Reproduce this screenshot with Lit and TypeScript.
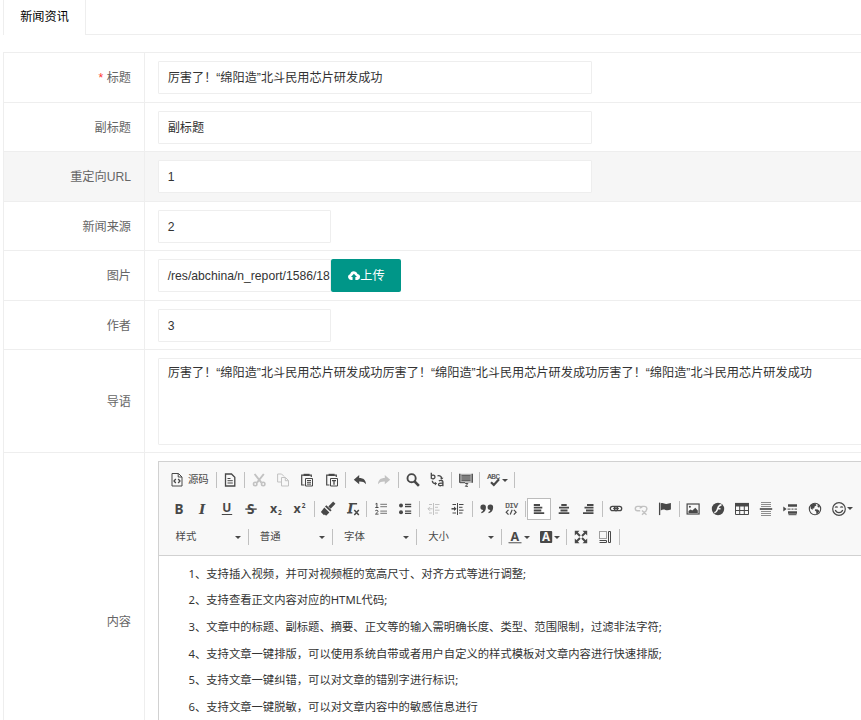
import { LitElement, html, svg, css, nothing } from "lit";
import { customElement, property } from "lit/decorators.js";
import { classMap } from "lit/directives/class-map.js";

const letter = (t: string, x: number, y: number, size: number, extra = "") =>
  svg`<text class="ch ${extra}" x=${x} y=${y} font-size=${size}>${t}</text>`;

/* Glyphs are drawn on a 16 x 16 grid. */
const icons: Record<string, unknown> = {
  source: svg`<path class="s" d="M3 1.5h6.5L13 5v9H3zM9.2 1.700V5H13"/><path class="s" stroke-width="1.300" d="M6.800 7L5 9l1.800 2M9.200 7L11 9l-1.800 2"/>`,
  newpage: svg`<path class="s" stroke-width="1.300" d="M3.500 2h6L12.800 5.300V14H3.500z"/><path class="s" d="M5.500 6.500h3M5.500 8.700h5.300M5.500 11h5.300"/>`,
  cut: svg`<path class="s" stroke-width="1.900" d="M3.600 2l6.800 8.600M12.800 2L6 10.600"/><circle class="s" cx="4.200" cy="12" r="1.700" stroke-width="1.600"/><circle class="s" cx="12.200" cy="12" r="1.700" stroke-width="1.600"/>`,
  copy: svg`<path class="s" d="M6.300 10H2.600V2h4l2.600 2.600M6.500 5.500h4L13.500 8.500V14h-7zM10.300 5.700v3h3"/>`,
  paste: svg`<path class="s" stroke-width="1.200" d="M5.500 13H2.700V3.200h9.600V5"/><path class="f" d="M4.600 1.800h6v2.200h-6z"/><path class="s" d="M6.500 6.500h7v7.500h-7zM8 8.500h4M8 10.300h4M8 12.100h4"/>`,
  pastetext: svg`<path class="s" stroke-width="1.200" d="M5.500 13H2.700V3.200h9.600V5"/><path class="f" d="M4.600 1.800h6v2.200h-6z"/><path class="s" d="M6.500 6.500h7v7.500h-7z"/><path class="s" stroke-width="1.300" d="M8 8.600h4M10 8.500v4.200"/>`,
  undo: svg`<path class="f" d="M1.800 7.700L7.200 3v2.900c4.300 0 6.600 2 6.800 6.300-1.700-2.300-3.600-2.900-6.800-2.800v2.900z"/>`,
  redo: svg`<path class="f" d="M14.200 7.700L8.800 3v2.900C4.500 5.900 2.200 7.900 2 12.200c1.700-2.300 3.600-2.900 6.800-2.800v2.900z"/>`,
  find: svg`<circle class="s" cx="6.600" cy="6.200" r="4.100" stroke-width="1.900"/><path class="s" stroke-width="2.600" d="M9.300 9.200l4.600 4.700"/>`,
  replace: svg`<path class="s" stroke-width="1.300" d="M2.300 .800v6M2.300 3.700c1-1 3.700-.8 3.700 1.300S3.300 7.200 2.300 6M9.900 9c1-.8 4-.8 4 .8v4.500M13.900 11.300c-2.800-.4-4.600.2-4.400 1.500s3.400 1.300 4.400-.3M8.500 3.800c2.700-.4 4 .5 4.200 2.700M3.300 8.800c.1 2.100 1 2.800 3.200 2.800"/><path class="f" d="M10.900 5.700h3.600l-1.800 2zM5.900 9.700l2.200 1.900-2.200 1.800z"/>`,
  selectall: svg`<path class="f" opacity=".4" d="M1.500 1.800h13v9h-13z"/><path class="s" stroke-width="1.200" d="M3.500 3.800h9M3.500 6h9M3.500 8.200h9M1.700 1.800v9M14.300 1.800v9"/><path class="s" d="M2 10.700h5M7.200 11.500h2.700l-2.500 2.800H10"/>`,
  spell: svg`${letter("ABC", 1.300, 7, 7.600, "narrow")}<path class="s" stroke-width="2.200" d="M5 10.300l2.800 2.600L13 7.200"/>`,
  bold: letter("B", 3.400, 12.600, 13.500),
  italic: letter("I", 4.100, 12.500, 13.500, "serif it"),
  underline: svg`${letter("U", 3.200, 11.300, 12)}<path class="s" d="M2.800 13.500h10.400"/>`,
  strike: svg`${letter("S", 4, 12.700, 13.500)}<path class="s" stroke-width="1.400" d="M2.300 8.100h11.400"/>`,
  sub: svg`${letter("x", 2, 11.800, 12.500)}${letter("2", 10, 13.700, 6.500)}`,
  sup: svg`${letter("x", 1.600, 12, 12.500)}${letter("2", 9.700, 6.800, 6.500)}`,
  brush: svg`<path class="s" stroke-width="3.200" d="M14.300 1.700L9.500 6.700"/><path class="f" d="M6.400 4.300l5.200 5-1.300 1.300L5 5.600zM4.300 6.500l5.100 5-3.300 3.200-1.300-1.300-.8.800L.900 11z"/>`,
  clear: svg`${letter("I", 2.300, 12, 13.500, "serif it")}<path class="s" stroke-width="1.500" d="M4.600 2.800h7.500M9.300 9l4.500 4.900M13.800 9L9.300 13.900"/><path class="s" d="M2 12h5.300"/>`,
  ol: svg`<path class="s" d="M2.500 3l1.400-.8v4.300M2.300 6.500h3.200M2.300 9.800c.6-.8 2.700-.8 2.700.4 0 1-1.200 1.500-2.500 2.900h3"/><path class="s soft" stroke-width="1.300" d="M7.300 3.400h6.700M7.300 5.600h6.700M7.300 10.200h6.700M7.300 12.400h6.700"/>`,
  ul: svg`<circle class="f" cx="4" cy="4.500" r="2"/><circle class="f" cx="4" cy="11.200" r="2"/><path class="s" stroke-width="1.300" d="M8 3.500h6.200M8 5.700h6.200M8 10.200h6.200M8 12.400h6.200"/>`,
  outdent: svg`<path class="s" d="M7.500 2v12M9 3.500h4.500M9 6.300h3M9 9.200h4.500M9 12h3M3 3.500h3M3 12h3M2 7.800h4.500M4 5.800l-2 2 2 2"/>`,
  indent: svg`<path class="s" d="M7.500 2v12M9 3.500h4.500M9 6.300h3.500M9 9.200h4.500M9 12h3.500M2.500 3.500h3.500M2.500 12h3.500"/><path class="s" stroke-width="1.500" d="M1.500 7.800h4"/><path class="f" d="M4 5.600l2.600 2.200L4 10z"/>`,
  quote: svg`<path class="f" d="M4.100 3.500a2.700 2.700 0 0 1 2.800 2.900c0 3-1.700 5.300-4.300 5.900l-.5-1.300c1.200-.5 1.800-1.200 2-2.100a2.700 2.700 0 0 1 0-5.400zM11.300 3.500a2.700 2.700 0 0 1 2.800 2.900c0 3-1.700 5.300-4.300 5.900l-.5-1.300c1.200-.5 1.800-1.200 2-2.100a2.700 2.700 0 0 1 0-5.400z"/>`,
  div: svg`${letter("DIV", 2.300, 6.800, 7.600, "narrow")}<path class="s" stroke-width="1.200" d="M5.500 8.800L3.200 11.200l2.300 2.400M10.800 8.800l2.300 2.400-2.300 2.400M9.200 8.800l-2 4.800"/>`,
  left: svg`<path class="s" stroke-width="1.800" d="M2.800 4h6.200M2.800 6.700h8.500M2.800 9.500h7.500M2.800 12.200h10.400"/>`,
  center: svg`<path class="s" stroke-width="1.800" d="M5.300 4h5.400M3 6.700h10M4.500 9.500h7M2.700 12.200h10.600"/>`,
  right: svg`<path class="s" stroke-width="1.800" d="M7 4h6.500M4.500 6.700h9M6 9.500h7.500M3 12.200h10.500"/>`,
  link: svg`<rect class="s" x="2.300" y="5.300" width="7.300" height="4.400" rx="2.200" stroke-width="1.300"/><rect class="s" x="6.400" y="5.300" width="7.300" height="4.400" rx="2.200" stroke-width="1.300"/><path class="s" stroke-width="1.200" d="M5.200 7.500h5.600"/>`,
  unlink: svg`<path class="s" stroke-width="1.400" d="M7.200 9.800H4.500a2.200 2.200 0 0 1 0-4.400H7a2.200 2.200 0 0 1 2 1.600M7.200 7.600a2.200 2.200 0 0 1 2-2.200h2.300c2.500 0 3 3 1.500 3.900M9 9.500l4.500 4.300M13.500 9.500L9 13.800"/>`,
  flag: svg`<path class="s" stroke-width="1.300" d="M2.600 1.600v12.500"/><path class="f" d="M3.700 2.500c2.300-1.300 3.800.8 5.700.5 1.600 0 2.900-.6 4.500-.9v6.400c-2 .7-3.800 1-5.500.4-1.800-.7-3.200-.3-4.700.6z"/>`,
  image: svg`<rect class="s" x="2.100" y="3" width="12" height="10" stroke-width="1.200"/><circle class="f" cx="4.900" cy="5.700" r="1"/><path class="f" d="M3.500 12v-2l2-1.500 1.800 1L10.300 6.800l2.500 2.600V12z"/>`,
  flash: svg`<circle class="f" cx="8" cy="8" r="6.200"/><path fill="none" stroke="#f8f8f8" stroke-width="1.600" d="M11.500 3.900C8.300 4 8.100 6.500 7.300 8.800c-.5 1.500-1.200 2.700-3 2.900M7.500 7.800h3"/>`,
  table: svg`<path class="f" d="M1 1.900h14v3.600H1z"/><path class="s" d="M1.500 5v8.500h13V5M1.500 9.500h13M5.700 5v8.500M10.300 5v8.500"/>`,
  hr: svg`<path class="s soft" d="M3 1.500h10M3 3.500h10M3 5.500h10M3 10.500h10M3 12.500h10M3 14.500h10"/><path class="s" stroke-width="1.600" d="M1.800 8h12.400"/>`,
  pagebreak: svg`<path class="f" d="M1.300 5.500L4.600 8l-3.300 2.500zM6 3.300h9v2.400H6zM6 10.300h9v2.400H6z"/><path class="s" d="M5.500 8.100h3m1 0h2m1 0h2.500M6.500 13.700h8"/>`,
  globe: svg`<circle class="s" cx="8" cy="8" r="5.700" stroke-width="1.100"/><path class="f" d="M3.500 4.500l2.800-2 2.400.4.700 1.700-1.800 1-.4 1.700-1.800.5L6 9 3.800 7.700zM8.200 8.200l2.600.2 1.700 1.500-1.800 2.800-1.300.4-.2-2.500-1.400-1zM10.800 3.300l2 2.200-.8 1.300-1.500-1z"/>`,
  smile: svg`<circle class="s" cx="8" cy="8" r="6.300" stroke-width="1.200"/><path class="s" stroke-width="1.300" d="M4.300 9c1.300 3.500 6.100 3.500 7.400 0M4.200 6.600c.4-1 2-1 2.400 0M9.400 6.600c.4-1 2-1 2.400 0"/>`,
  color: svg`${letter("A", 3.400, 11.500, 12.500)}<path class="s" stroke-width="1.300" opacity=".75" d="M1.500 13.700h13"/>`,
  bgcolor: svg`<rect class="f" x="2" y="1.900" width="12.200" height="12.200" rx="1"/><text class="ch inv" x="4" y="12" font-size="11.500">A</text>`,
  maximize: svg`<path class="f" d="M1.800 1.800h4.700L1.800 6.500zM14.200 1.800H9.500l4.700 4.700zM1.800 14.200h4.700L1.800 9.500zM14.200 14.200H9.500l4.700-4.700z"/><path class="s" stroke-width="2" d="M3 3l4 4M13 3L9 7M3 13l4-4M13 13L9 9"/>`,
  blocks: svg`<path class="s" stroke-dasharray="1 1" d="M2.500 2.500h7v7h-7z"/><path class="s" d="M11.500 2.500h2v11h-2M2.500 11.500h7v2h-7M11.500 2.500v11"/>`,
  upload: svg`<path class="f" d="M5 13.100A3.600 3.600 0 0 1 3.700 6.100a4.600 4.600 0 0 1 8.800-.3 3.700 3.700 0 0 1-.2 7.300H9.900V9.500h1.900L8.200 5.500 4.700 9.500h1.900v3.600z"/>`,
};

@customElement("ui-icon")
class UiIcon extends LitElement {
  @property() name = "";
  static styles = css`
    :host { display: block; width: 16px; height: 16px; flex: none; }
    svg { display: block; width: 100%; height: 100%; overflow: visible; }
    .s { fill: none; stroke: currentColor; }
    .f { fill: currentColor; }
    .soft { opacity: 0.6; }
    .ch { fill: currentColor; font-family: "Noto Sans", sans-serif; font-weight: 700; }
    .narrow { font-family: "Liberation Mono", monospace; font-weight: 400; stroke: currentColor; stroke-width: 0.2; letter-spacing: -0.5px; }
    .serif { font-family: "DejaVu Serif", serif; }
    .it { font-style: italic; }
    .inv { fill: #f8f8f8; }
  `;
  render() {
    return html`<svg viewBox="0 0 16 16">${icons[this.name]}</svg>`;
  }
}

type Tool = string;
const rows: Tool[][] = [
  ["source", "|", "newpage", "|", "cut-", "copy-", "paste", "pastetext", "|", "undo", "redo-", "|", "find", "replace", "|", "selectall", "|", "spell+", "|"],
  ["bold", "italic", "underline", "strike", "sub", "sup", "|", "brush", "clear", "|", "ol", "ul", "|", "outdent-", "indent", "|", "quote", "div", "|", "left*", "center", "right", "|", "link", "unlink-", "flag", "|", "image", "flash", "table", "hr", "pagebreak", "globe", "smile+"],
  ["样式", "|", "普通", "|", "字体", "|", "大小", "|", "color+", "bgcolor+", "|", "maximize", "blocks", "|"],
];

@customElement("rich-editor")
class RichEditor extends LitElement {
  static styles = css`
    :host { display: block; height: 300px; border: 1px solid #d1d1d1; box-sizing: border-box; background: #fff; color: #484848; }
    .bar { height: 94px; box-sizing: border-box; background: #f8f8f8; border-bottom: 1px solid #d1d1d1; padding: 4px 0 0 7.4px; }
    .line { display: flex; align-items: center; height: 28.5px; }
    .tool { width: 24.28px; height: 22px; box-sizing: border-box; flex: none; display: flex; align-items: center; justify-content: center; }
    .off { opacity: 0.3; }
    .on { background: #fff; border: 1px solid #bcbcbc; }
    .drop { width: 30.6px; justify-content: flex-start; padding-left: 4px; gap: 0.5px; }
    .source { width: 47.5px; justify-content: flex-start; padding-left: 3px; gap: 2.5px; }
    .combo { width: 80px; justify-content: space-between; padding: 0 5.5px 0 9.2px; }
    .label { font: 10.4px/16px "Liberation Sans", "Noto Sans CJK SC", sans-serif; white-space: nowrap; }
    .caret { width: 0; height: 0; flex: none; border: 3px solid transparent; border-top: 3px solid #484848; border-bottom: 0; }
    .sep { width: 1px; height: 16px; margin: 0 1.62px; background: #c0c0c0; flex: none; }
    .doc { padding: 4.500px 0 0 29.500px; font: 11.32px/26.7px "Noto Sans", "Noto Sans CJK SC", sans-serif; color: #333; }
    p { margin: 0; white-space: nowrap; }
  `;
  tool(t: Tool) {
    if (t === "|") return html`<span class="sep"></span>`;
    if (t === "source") return html`<span class="tool source"><ui-icon name="source"></ui-icon><span class="label">源码</span></span>`;
    if (t > "~") return html`<span class="tool combo"><span class="label">${t}</span><span class="caret"></span></span>`;
    const flags = { tool: true, off: t.endsWith("-"), on: t.endsWith("*"), drop: t.endsWith("+") };
    return html`<span class=${classMap(flags)}><ui-icon name=${t.replace(/[-*+]$/, "")}></ui-icon>${flags.drop ? html`<span class="caret"></span>` : nothing}</span>`;
  }
  render() {
    return html`
      <div class="bar">${rows.map((r) => html`<div class="line">${r.map((t) => this.tool(t))}</div>`)}</div>
      <div class="doc">
        <p>1、支持插入视频，并可对视频框的宽高尺寸、对齐方式等进行调整;</p>
        <p>2、支持查看正文内容对应的HTML代码;</p>
        <p>3、文章中的标题、副标题、摘要、正文等的输入需明确长度、类型、范围限制，过滤非法字符;</p>
        <p>4、支持文章一键排版，可以使用系统自带或者用户自定义的样式模板对文章内容进行快速排版;</p>
        <p>5、支持文章一键纠错，可以对文章的错别字进行标识;</p>
        <p>6、支持文章一键脱敏，可以对文章内容中的敏感信息进行</p>
      </div>`;
  }
}

const title = "厉害了！“绵阳造”北斗民用芯片研发成功";

@customElement("app-root")
class AppRoot extends LitElement {
  static styles = css`
    :host { display: block; height: 720px; overflow: hidden; background: #fff; color: #333; font: 12.16px/18px "Liberation Sans", "Noto Sans CJK SC", sans-serif; }
    .tabs { display: flex; height: 35px; padding-left: 3px; margin-bottom: 17px; }
    .tab { width: 83px; box-sizing: border-box; border: solid #eee; border-width: 0 1px; text-align: center; line-height: 34.500px; color: #000; }
    .fill { flex: 1; border-bottom: 1px solid #eee; }
    .form { margin-left: 3px; border: solid #eee; border-width: 1px 0 0 1px; }
    .row { display: flex; height: 49.5px; box-sizing: border-box; border-bottom: 1px solid #eee; }
    .hover { background: #f6f6f6; }
    .name { width: 141px; box-sizing: border-box; flex: none; border-right: 1px solid #eee; padding: 2px 13px 0 0; display: flex; align-items: center; justify-content: flex-end; color: #666; }
    .req { color: #f33; margin-right: 3.500px; }
    .cell { flex: 1; min-width: 0; display: flex; padding: 8px 0 0 13px; }
    .field { width: 434px; height: 33px; box-sizing: border-box; border: 1px solid #eee; border-radius: 1px; background: #fff; padding-left: 8.700px; line-height: 33px; white-space: nowrap; overflow: hidden; }
    .short { width: 173px; }
    .tall { height: 103px; }
    .area { flex: 1; height: 87px; line-height: 17px; padding-top: 5.500px; margin-right: -2px; }
    .upload { width: 70px; height: 33px; box-sizing: border-box; padding-top: 1px; background: #009688; color: #fff; border-radius: 2px; display: flex; align-items: center; justify-content: center; }
    .upload ui-icon { width: 13.500px; height: 13.500px; margin-right: -0.500px; }
    .body { height: 400px; }
    .body .name { height: 337px; padding-top: 0; }
    .body rich-editor { flex: 1; margin-right: -2px; }
  `;
  row(name: string, content: unknown, kind = "", required = false) {
    return html`<div class="row ${kind}">
      <div class="name">${required ? html`<span class="req">*</span>` : nothing}${name}</div>
      <div class="cell">${content}</div>
    </div>`;
  }
  render() {
    return html`
      <div class="tabs"><div class="tab">新闻资讯</div><div class="fill"></div></div>
      <div class="form">
        ${this.row("标题", html`<div class="field">${title}</div>`, "", true)}
        ${this.row("副标题", html`<div class="field">副标题</div>`)}
        ${this.row("重定向URL", html`<div class="field">1</div>`, "hover")}
        ${this.row("新闻来源", html`<div class="field short">2</div>`)}
        ${this.row("图片", html`<div class="field short">/res/abchina/n_report/1586/18.</div><div class="upload"><ui-icon name="upload"></ui-icon>上传</div>`)}
        ${this.row("作者", html`<div class="field short">3</div>`)}
        ${this.row("导语", html`<div class="field area">${title.repeat(3)}</div>`, "tall")}
        ${this.row("内容", html`<rich-editor></rich-editor>`, "body")}
      </div>`;
  }
}
